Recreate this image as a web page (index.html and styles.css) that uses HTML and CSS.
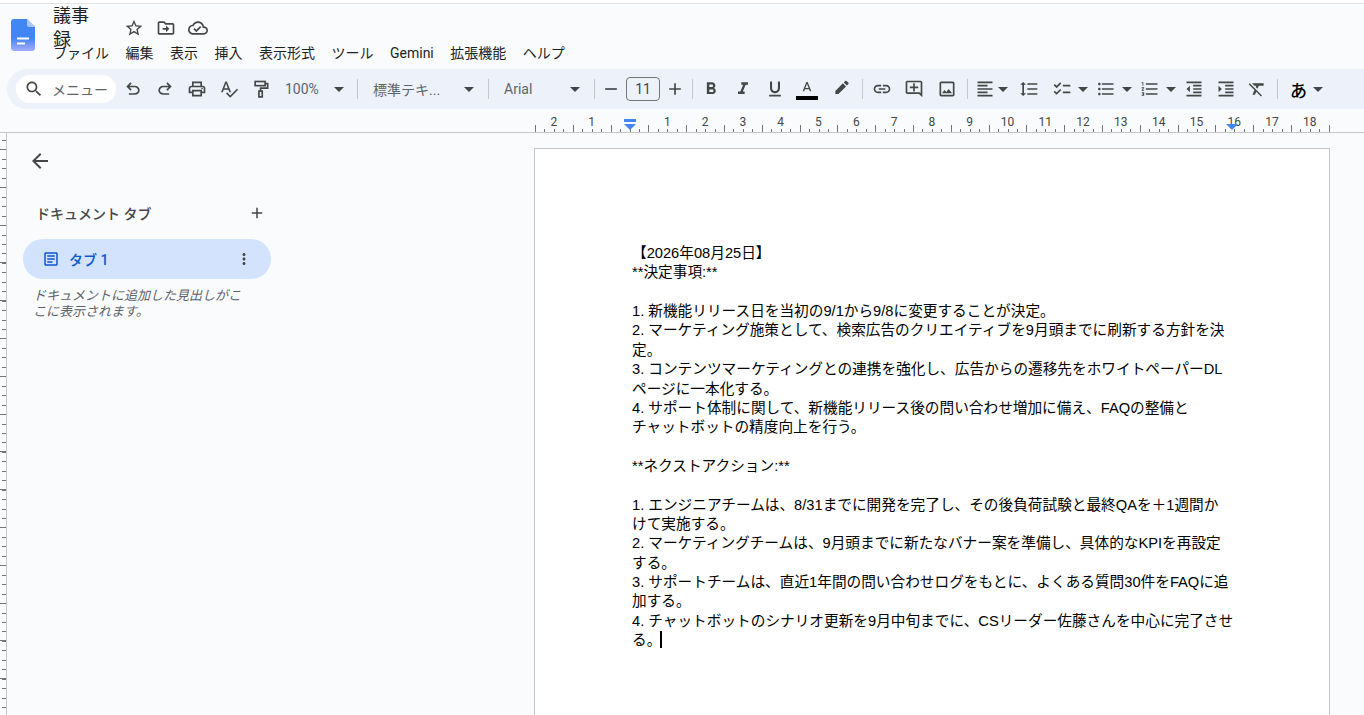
FILE: index.html
```html
<!DOCTYPE html>
<html lang="ja">
<head>
  <meta charset="UTF-8" />
  <meta name="viewport" content="width=device-width, initial-scale=1.0"/>
  <title>議事録</title>

  <link rel="stylesheet" href="styles.css">
</head>
<body>

  <header class="header">
    <svg class="logo" viewBox="0 0 24 32" width="24" height="32">
      <defs>
        <linearGradient id="logo-fill" x1="0" y1="0" x2="0" y2="1">
          <stop offset="0.6" stop-color="#4285f4"/>
          <stop offset="1" stop-color="#a3adff"/>
        </linearGradient>
      </defs>
      <path fill="url(#logo-fill)" d="M3 0h13l8 8v21a3 3 0 0 1-3 3H3a3 3 0 0 1-3-3V3a3 3 0 0 1 3-3z"/>
      <path fill="#a9c7fa" d="M16 0l8 8h-6a2 2 0 0 1-2-2z"/>
      <rect fill="#fff" x="6" y="18.500" width="12" height="2"/>
      <rect fill="#fff" x="6" y="23.500" width="8" height="2"/>
    </svg>
    <div class="doc-head">
      <div class="title-row">
        <span class="doc-title">議事録</span>
        <svg class="title-icon" viewBox="0 0 24 24"><path d="M22 9.240l-7.190-.62L12 2 9.190 8.630 2 9.240l5.460 4.730L5.820 21 12 17.270 18.180 21l-1.630-7.030L22 9.240zM12 15.400l-3.760 2.270 1-4.280-3.320-2.880 4.380-.38L12 6.100l1.710 4.040 4.380.38-3.320 2.880 1 4.280L12 15.400z"/></svg>
        <svg class="title-icon" viewBox="0 0 24 24"><path d="M20 6h-8l-2-2H4c-1.100 0-2 .9-2 2v12c0 1.100.9 2 2 2h16c1.100 0 2-.9 2-2V8c0-1.100-.9-2-2-2zm0 12H4V6h5.170l2 2H20v10zm-8-4H8v-2h4V9l4 4-4 4v-3z"/></svg>
        <svg class="title-icon" viewBox="0 0 24 24"><path d="M19.350 10.040C18.670 6.590 15.640 4 12 4 9.110 4 6.600 5.640 5.350 8.040 2.340 8.360 0 10.910 0 14c0 3.310 2.690 6 6 6h13c2.760 0 5-2.240 5-5 0-2.640-2.050-4.780-4.650-4.960zM19 18H6c-2.210 0-4-1.790-4-4 0-2.050 1.530-3.760 3.560-3.970l1.070-.11.5-.95C8.080 7.140 9.940 6 12 6c2.620 0 4.880 1.860 5.390 4.430l.3 1.500 1.530.11c1.560.1 2.780 1.410 2.780 2.960 0 1.650-1.350 3-3 3zm-9-3.820l-2.090-2.090L6.500 13.500 10 17l6.010-6.010-1.410-1.410z"/></svg>
      </div>
      <nav class="menu">
        <span>ファイル</span>
        <span>編集</span>
        <span>表示</span>
        <span>挿入</span>
        <span>表示形式</span>
        <span>ツール</span>
        <span>Gemini</span>
        <span>拡張機能</span>
        <span>ヘルプ</span>
      </nav>
    </div>
  </header>

  <div class="toolbar">
    <div class="search">
      <svg class="icon" viewBox="0 0 24 24"><path d="M15.500 14h-.79l-.28-.27C15.410 12.590 16 11.110 16 9.500 16 5.910 13.090 3 9.500 3S3 5.910 3 9.500 5.910 16 9.500 16c1.610 0 3.090-.59 4.230-1.570l.27.28v.79l5 4.990L20.490 19l-4.990-5zm-6 0C7.010 14 5 11.990 5 9.500S7.010 5 9.500 5 14 7.010 14 9.500 11.990 14 9.500 14z"/></svg>
      <span>メニュー</span>
    </div>
    <div class="btn ml1"><svg class="icon" viewBox="0 0 24 24"><path d="M7 19v-2h7.100q1.575 0 2.737-1T18 13.500q0-1.500-1.163-2.500T14.100 10H7.800l2.600 2.600L9 14 4 9l5-5 1.400 1.400L7.800 8h6.300q2.425 0 4.163 1.575T20 13.500q0 2.350-1.737 3.925T14.100 19H7z"/></svg></div>
    <div class="btn"><svg class="icon flip" viewBox="0 0 24 24"><path d="M7 19v-2h7.100q1.575 0 2.737-1T18 13.500q0-1.500-1.163-2.500T14.100 10H7.800l2.600 2.600L9 14 4 9l5-5 1.400 1.400L7.800 8h6.300q2.425 0 4.163 1.575T20 13.500q0 2.350-1.737 3.925T14.100 19H7z"/></svg></div>
    <div class="btn"><svg class="icon" viewBox="0 0 24 24"><path d="M19 8h-1V3H6v5H5c-1.660 0-3 1.340-3 3v6h4v4h12v-4h4v-6c0-1.660-1.340-3-3-3zM8 5h8v3H8V5zm8 12v2H8v-4h8v2zm2-2v-2H6v2H4v-4c0-.55.45-1 1-1h14c.55 0 1 .45 1 1v4h-2z"/><circle cx="18" cy="11.500" r="1"/></svg></div>
    <div class="btn"><svg class="icon" viewBox="0 0 24 24"><path d="M12.450 16h2.090L9.430 3H7.570L2.460 16h2.090l1.120-3h5.640l1.140 3zm-6.020-5L8.500 5.480 10.570 11H6.430zm15.160.59l-8.090 8.090L9.830 16l-1.410 1.410 5.090 5.090L23 13l-1.410-1.410z"/></svg></div>
    <div class="btn"><svg class="icon" viewBox="0 0 24 24"><g class="line-icon"><rect x="5" y="3" width="12" height="5"/><path d="M17 5.500h3V11h-8.500v3.500"/><rect x="9.500" y="14.500" width="4" height="7"/></g></svg></div>
    <div class="select select-zoom"><span>100%</span><i class="caret"></i></div>
    <div class="sep"></div>
    <div class="select select-style"><span>標準テキ...</span><i class="caret"></i></div>
    <div class="sep"></div>
    <div class="select select-font"><span>Arial</span><i class="caret"></i></div>
    <div class="sep"></div>
    <div class="btn btn-small"><svg class="icon" viewBox="0 0 24 24"><path d="M5 11h14v2H5z"/></svg></div>
    <div class="size-box">11</div>
    <div class="btn btn-small"><svg class="icon" viewBox="0 0 24 24"><path d="M19 13h-6v6h-2v-6H5v-2h6V5h2v6h6v2z"/></svg></div>
    <div class="sep sep-font"></div>
    <div class="btn"><svg class="icon" viewBox="0 0 24 24"><path d="M15.600 10.790c.97-.67 1.650-1.770 1.650-2.790 0-2.260-1.750-4-4-4H7v14h7.040c2.090 0 3.710-1.700 3.710-3.790 0-1.520-.86-2.820-2.150-3.420zM10 6.500h3c.83 0 1.500.67 1.500 1.500s-.67 1.500-1.500 1.500h-3v-3zm3.500 9H10v-3h3.500c.83 0 1.500.67 1.500 1.500s-.67 1.500-1.500 1.500z"/></svg></div>
    <div class="btn"><svg class="icon" viewBox="0 0 24 24"><path d="M10 4v3h2.210l-3.420 8H6v3h8v-3h-2.210l3.420-8H18V4z"/></svg></div>
    <div class="btn"><svg class="icon" viewBox="0 0 24 24"><path d="M12 17c3.310 0 6-2.690 6-6V3h-2.500v8c0 1.930-1.570 3.500-3.500 3.500S8.500 12.930 8.500 11V3H6v8c0 3.310 2.690 6 6 6zm-7 2v2h14v-2H5z"/></svg></div>
    <div class="btn btn-color">
      <svg class="icon-a" viewBox="0 0 24 24"><path d="M11 3L5.500 17h2.250l1.120-3h6.250l1.120 3h2.250L13 3h-2zm-1.380 9L12 5.670 14.380 12H9.620z"/></svg>
      <i class="color-bar"></i>
    </div>
    <div class="btn ml3"><svg class="icon" viewBox="0 0 24 24"><path d="M13.060 5.190l3.750 3.750L7.750 18H4v-3.750l9.060-9.060zm4.820 2.680l-3.750-3.750 1.830-1.830c.39-.39 1.020-.39 1.410 0l2.340 2.340c.39.39.39 1.020 0 1.410l-1.830 1.830z"/></svg></div>
    <div class="sep sep-insert"></div>
    <div class="btn"><svg class="icon" viewBox="0 0 24 24"><path d="M3.900 12c0-1.710 1.390-3.100 3.100-3.100h4V7H7c-2.760 0-5 2.240-5 5s2.240 5 5 5h4v-1.900H7c-1.710 0-3.100-1.390-3.100-3.100zM8 13h8v-2H8v2zm9-6h-4v1.900h4c1.710 0 3.100 1.390 3.100 3.100s-1.390 3.100-3.100 3.100h-4V17h4c2.760 0 5-2.240 5-5s-2.240-5-5-5z"/></svg></div>
    <div class="btn"><svg class="icon" viewBox="0 0 24 24"><path d="M22 4c0-1.100-.9-2-2-2H4c-1.100 0-2 .9-2 2v12c0 1.100.9 2 2 2h14l4 4V4zm-2 0v13.170L18.830 16H4V4h16zM13 5h-2v4H7v2h4v4h2v-4h4V9h-4z"/></svg></div>
    <div class="btn ml1"><svg class="icon" viewBox="0 0 24 24"><path d="M19 5v14H5V5h14m0-2H5c-1.100 0-2 .9-2 2v14c0 1.100.9 2 2 2h14c1.100 0 2-.9 2-2V5c0-1.100-.9-2-2-2zm-4.860 8.860l-3 3.870L9 13.140 6 17h12l-3.860-5.140z"/></svg></div>
    <div class="sep sep-align"></div>
    <div class="drop drop-align"><svg class="icon" viewBox="0 0 24 24"><path d="M15 15H3v2h12v-2zm0-8H3v2h12V7zM3 13h18v-2H3v2zm0 8h18v-2H3v2zM3 3v2h18V3H3z"/></svg><i class="caret"></i></div>
    <div class="btn ml2"><svg class="icon" viewBox="0 0 24 24"><path d="M6 7h2.500L5 3.500 1.500 7H4v10H1.500L5 20.500 8.500 17H6V7zm4-2v2h12V5H10zm0 14h12v-2H10v2zm0-6h12v-2H10v2z"/></svg></div>
    <div class="drop ml4"><svg class="icon" viewBox="0 0 24 24"><path d="M22 7h-9v2h9V7zm0 8h-9v2h9v-2zM5.540 11L2 7.460l1.410-1.410 2.120 2.120 4.240-4.240 1.410 1.410L5.540 11zm0 8L2 15.460l1.410-1.410 2.120 2.120 4.240-4.240 1.410 1.410L5.540 19z"/></svg><i class="caret"></i></div>
    <div class="drop ml2"><svg class="icon" viewBox="0 0 24 24"><path d="M4 10.500c-.83 0-1.500.67-1.500 1.500s.67 1.500 1.500 1.500 1.500-.67 1.500-1.500-.67-1.500-1.500-1.500zm0-6c-.83 0-1.500.67-1.500 1.500S3.170 7.500 4 7.500 5.500 6.830 5.500 6 4.830 4.500 4 4.500zm0 12c-.83 0-1.500.68-1.500 1.500s.68 1.500 1.500 1.500 1.500-.68 1.500-1.500-.67-1.500-1.500-1.500zM7 19h14v-2H7v2zm0-6h14v-2H7v2zm0-8v2h14V5H7z"/></svg><i class="caret"></i></div>
    <div class="drop drop-num ml2"><svg class="icon" viewBox="0 0 24 24"><path d="M2 17h2v.5H3v1h1v.5H2v1h3v-4H2v1zm1-9h1V4H2v1h1v3zm-1 3h1.800L2 13.100v.9h3v-1H3.200L5 10.900V10H2v1zm5-6v2h14V5H7zm0 14h14v-2H7v2zm0-6h14v-2H7v2z"/></svg><i class="caret"></i></div>
    <div class="btn"><svg class="icon" viewBox="0 0 24 24"><path d="M11 17h10v-2H11v2zm-8-5l4 4V8l-4 4zm0 9h18v-2H3v2zM3 3v2h18V3H3zm8 6h10V7H11v2zm0 4h10v-2H11v2z"/></svg></div>
    <div class="btn"><svg class="icon" viewBox="0 0 24 24"><path d="M3 21h18v-2H3v2zM3 8v8l4-4-4-4zm8 9h10v-2H11v2zM3 3v2h18V3H3zm8 6h10V7H11v2zm0 4h10v-2H11v2z"/></svg></div>
    <div class="btn btn-clear"><svg class="icon" viewBox="0 0 24 24"><path d="M3.270 5L2 6.270l6.970 6.970L6.500 19h3l1.570-3.660L16.730 21 18 19.730 3.550 5.270 3.270 5zM6 5v.18L8.820 8h2.400l-.72 1.680 2.100 2.100L14.210 8H20V5H6z"/></svg></div>
    <div class="sep sep-lang"></div>
    <div class="lang"><span>あ</span><i class="caret"></i></div>
  </div>

  <div class="ruler">
    <div class="ruler-scale">
      <span>2</span><span>1</span><span></span><span>1</span><span>2</span><span>3</span><span>4</span><span>5</span><span>6</span><span>7</span><span>8</span><span>9</span><span>10</span><span>11</span><span>12</span><span>13</span><span>14</span><span>15</span><span>16</span><span>17</span><span>18</span>
    </div>
    <i class="marker-bar"></i>
    <i class="marker marker-left"></i>
    <i class="marker marker-right"></i>
  </div>

  <main class="main">
    <div class="vruler"></div>
    <div class="workspace">
      <aside class="sidebar">
        <svg class="back" viewBox="0 0 24 24"><path d="M20 11H7.830l5.590-5.590L12 4l-8 8 8 8 1.410-1.410L7.830 13H20v-2z"/></svg>
        <div class="tabs-head">
          <span>ドキュメント タブ</span>
          <svg viewBox="0 0 24 24"><path d="M19 13h-6v6h-2v-6H5v-2h6V5h2v6h6v2z"/></svg>
        </div>
        <div class="tab">
          <svg class="tab-icon" viewBox="0 0 24 24"><path d="M19 5v14H5V5h14m0-2H5c-1.100 0-2 .9-2 2v14c0 1.100.9 2 2 2h14c1.100 0 2-.9 2-2V5c0-1.100-.9-2-2-2z"/><path d="M14 17H7v-2h7v2zm3-4H7v-2h10v2zm0-4H7V7h10v2z"/></svg>
          <span class="tab-name">タブ 1</span>
          <svg class="tab-more" viewBox="0 0 24 24"><path d="M12 8c1.100 0 2-.9 2-2s-.9-2-2-2-2 .9-2 2 .9 2 2 2zm0 2c-1.100 0-2 .9-2 2s.9 2 2 2 2-.9 2-2-.9-2-2-2zm0 6c-1.100 0-2 .9-2 2s.9 2 2 2 2-.9 2-2-.9-2-2-2z"/></svg>
        </div>
        <p class="tab-hint">ドキュメントに追加した見出しがこ<br>こに表示されます。</p>
      </aside>

      <article class="page">
        <p>【2026年08月25日】</p>
        <p>**決定事項:**</p>
        <p>&nbsp;</p>
        <p>1. 新機能リリース日を当初の9/1から9/8に変更することが決定。</p>
        <p>2. マーケティング施策として、検索広告のクリエイティブを9月頭までに刷新する方針を決</p>
        <p>定。</p>
        <p>3. コンテンツマーケティングとの連携を強化し、広告からの遷移先をホワイトペーパーDL</p>
        <p>ページに一本化する。</p>
        <p>4. サポート体制に関して、新機能リリース後の問い合わせ増加に備え、FAQの整備と</p>
        <p>チャットボットの精度向上を行う。</p>
        <p>&nbsp;</p>
        <p>**ネクストアクション:**</p>
        <p>&nbsp;</p>
        <p>1. エンジニアチームは、8/31までに開発を完了し、その後負荷試験と最終QAを＋1週間か</p>
        <p>けて実施する。</p>
        <p>2. マーケティングチームは、9月頭までに新たなバナー案を準備し、具体的なKPIを再設定</p>
        <p>する。</p>
        <p>3. サポートチームは、直近1年間の問い合わせログをもとに、よくある質問30件をFAQに追</p>
        <p>加する。</p>
        <p>4. チャットボットのシナリオ更新を9月中旬までに、CSリーダー佐藤さんを中心に完了させ</p>
        <p>る。<i class="cursor"></i></p>
      </article>
    </div>
  </main>

</body>
</html>
```

FILE: styles.css
```css
:root {
  --bg: #f9fbfd;
  --bar: #edf2fa;
  --icon: #444746;
  --line: #c7c7c7;
  --blue: #4285f4;
  --tick: #70757a;
}

* {
  margin: 0;
  padding: 0;
  box-sizing: border-box;
}

html, body {
  height: 100%;
  overflow: hidden;
}

body {
  background-color: var(--bg);
  color: #1f1f1f;
  font-family: Roboto, "Noto Sans CJK JP", sans-serif;
  font-size: 14px;
  padding-top: 3px;
  display: flex;
  flex-direction: column;
  box-shadow: inset 0 3px 0 #fff;
}

svg {
  fill: var(--icon);
  flex: none;
}

/* === Title and menu === */
.header {
  height: 66px;
  flex: none;
  display: flex;
  align-items: flex-start;
  border-top: 1px solid #e3e3e3;
  padding: 15px 0 0 11px;
}

.logo {
  display: block;
}

.doc-head {
  margin-left: 18px;
  margin-top: -3px;
}

.title-row {
  height: 24px;
  display: flex;
  align-items: center;
}

.doc-title {
  font-size: 18px;
  line-height: 24px;
  width: 53px;
}

.title-icon {
  width: 20px;
  height: 20px;
  margin-right: 12px;
}

.title-icon:first-of-type {
  margin-left: 18px;
}

.menu {
  display: flex;
  gap: 16.5px;
  margin-top: 3px;
  line-height: 20px;
  white-space: nowrap;
}

/* === Toolbar === */
.toolbar {
  height: 40px;
  flex: none;
  margin-left: 7px;
  padding-left: 9px;
  background-color: var(--bar);
  border-radius: 20px 0 0 20px;
  display: flex;
  align-items: center;
  color: #5f6368;
  white-space: nowrap;
}

.search {
  width: 100px;
  height: 28px;
  background-color: #fff;
  border-radius: 14px;
  display: flex;
  align-items: center;
  gap: 8px;
  padding-left: 8px;
}

.icon {
  width: 20px;
  height: 20px;
}

.flip {
  transform: scaleX(-1);
}

.line-icon {
  fill: none;
  stroke: var(--icon);
  stroke-width: 2;
}

.btn {
  width: 32px;
  height: 28px;
  display: flex;
  align-items: center;
  justify-content: center;
  flex: none;
}

.btn-small {
  width: 16px;
}

.btn-clear {
  width: 30px;
}

.btn-color {
  flex-direction: column;
  gap: 0;
}

.icon-a {
  width: 16px;
  height: 16px;
  margin-top: 2px;
}

.color-bar {
  display: block;
  width: 22px;
  height: 4px;
  background-color: #000;
}

.ml1 { margin-left: 1px; }
.ml2 { margin-left: 2px; }
.ml3 { margin-left: 3px; }
.ml4 { margin-left: 4px; }

.sep {
  width: 1px;
  height: 20px;
  margin: 0 8px;
  background-color: var(--line);
  flex: none;
}

.sep-font { margin: 0 2px 0 9px; }
.sep-insert { margin: 0 3px 0 4px; }
.sep-align { margin: 0 4px; }
.sep-lang { margin: 0 0 0 5px; }

.caret {
  display: block;
  flex: none;
  width: 0;
  height: 0;
  border-style: solid;
  border-width: 5px 5px 0;
  border-color: var(--icon) transparent transparent;
}

.select {
  height: 28px;
  display: flex;
  align-items: center;
  justify-content: space-between;
  padding: 0 6px 0 7px;
  flex: none;
}

.select-zoom {
  width: 72px;
  padding: 0 5px 0 8px;
}

.select-style { width: 114px; }
.select-font { width: 89px; }

.size-box {
  width: 34px;
  height: 24px;
  margin: 0 7px;
  border: 1px solid #747775;
  border-radius: 4px;
  text-align: center;
  line-height: 22px;
  color: var(--icon);
  flex: none;
}

.drop {
  width: 42px;
  height: 28px;
  padding-left: 3px;
  display: flex;
  align-items: center;
  gap: 6px;
  flex: none;
}

.drop-align {
  width: 39px;
  gap: 3px;
}

.drop-num { width: 41px; }

.lang {
  display: flex;
  align-items: center;
  gap: 6px;
  padding-left: 12px;
  font-size: 17px;
  font-weight: 500;
  color: #000;
}

/* === Rulers === */
.ruler {
  position: relative;
  height: 24px;
  flex: none;
  padding-left: 535px;
  border-bottom: 1px solid var(--line);
}

.ruler-scale {
  width: 795px;
  height: 23px;
  display: flex;
  background-image:
    repeating-linear-gradient(90deg, var(--tick) 0 1px, transparent 1px 37.8px),
    repeating-linear-gradient(90deg, var(--tick) 0 1px, transparent 1px 9.45px);
  background-size: 100% 7px, 100% 3px;
  background-position: left bottom;
  background-repeat: no-repeat;
}

.ruler-scale span {
  width: 37.8px;
  flex: none;
  padding-top: 6px;
  text-align: center;
  font-size: 12px;
  line-height: 14px;
  color: #444746;
}

.marker-bar {
  position: absolute;
  left: 624px;
  top: 10px;
  width: 12px;
  height: 3px;
  background-color: var(--blue);
}

.marker {
  position: absolute;
  top: 15px;
  width: 0;
  height: 0;
  border-style: solid;
  border-width: 6px 6px 0;
  border-color: var(--blue) transparent transparent;
}

.marker-left { left: 624px; }
.marker-right { left: 1226px; }

.main {
  flex: 1;
  min-height: 0;
  display: flex;
}

.vruler {
  width: 6px;
  flex: none;
  background-image:
    repeating-linear-gradient(180deg, var(--tick) 0 1px, transparent 1px 37.8px),
    repeating-linear-gradient(180deg, var(--tick) 0 1px, transparent 1px 9.45px);
  background-size: 6px 100%, 4px 100%;
  background-position: 0 16px, 2px 6.55px;
  background-repeat: no-repeat;
}

.workspace {
  flex: 1;
  display: flex;
  align-items: flex-start;
  border-left: 1px solid var(--line);
}

/* === Document tabs === */
.sidebar {
  width: 527px;
  flex: none;
  padding: 16px 0 0 16px;
}

.back {
  display: block;
  width: 24px;
  height: 24px;
  margin-left: 5px;
}

.tabs-head {
  width: 230px;
  height: 24px;
  margin: 28px 0 0 13px;
  display: flex;
  align-items: center;
  justify-content: space-between;
  font-weight: 500;
  color: #444746;
}

.tabs-head svg {
  width: 18px;
  height: 18px;
}

.tab {
  width: 248px;
  height: 40px;
  margin-top: 14px;
  padding: 0 18px 0 19px;
  background-color: #d3e3fd;
  border-radius: 20px;
  display: flex;
  align-items: center;
  color: #0b57d0;
  font-weight: 500;
}

.tab-icon {
  width: 18px;
  height: 18px;
  fill: #0b57d0;
}

.tab-name {
  margin-left: 9px;
  flex: 1;
}

.tab-more {
  width: 18px;
  height: 18px;
}

.tab-hint {
  margin: 9px 0 0 10px;
  font-size: 13px;
  line-height: 16px;
  font-style: italic;
  color: #5f6368;
  white-space: nowrap;
}

/* === Page === */
.page {
  width: 796px;
  height: 700px;
  flex: none;
  margin-top: 15px;
  padding: 95px 0 0 97px;
  background-color: #fff;
  border: 1px solid var(--line);
  color: #000;
  font-family: "Liberation Sans", "Noto Sans CJK JP", sans-serif;
  font-size: 14.67px;
  line-height: 19.36px;
  white-space: nowrap;
}

.page p {
  height: 19.36px;
}

.cursor {
  display: inline-block;
  width: 2px;
  height: 17px;
  background-color: #000;
  vertical-align: -3px;
  margin-left: -1px;
}
```
